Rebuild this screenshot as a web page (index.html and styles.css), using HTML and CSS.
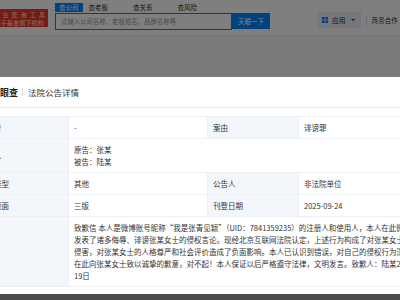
FILE: index.html
```html
<!DOCTYPE html>
<html lang="zh-CN">
<head>
  <meta charset="UTF-8" />
  <meta name="viewport" content="width=device-width, initial-scale=1.0"/>
  <title>法院公告详情</title>
  <link rel="stylesheet" href="styles.css">
</head>
<body>

  <div class="page">
    <header class="topbar">
      <div class="promo">
        <span class="promo-l1">企业查询工具</span>
        <span class="promo-l2">国家母子基金旗下机构</span>
      </div>

      <div class="search">
        <div class="tabs">
          <span class="tab active">查公司</span>
          <span class="tab">查老板</span>
          <span class="tab">查关系</span>
          <span class="tab">查风险</span>
        </div>
        <div class="search-row">
          <div class="search-input">请输入公司名称、老板姓名、品牌名称等</div>
          <button class="search-btn">天眼一下</button>
        </div>
      </div>

      <div class="nav-right">
        <span class="apps">
          <svg width="6" height="6" viewBox="0 0 6 6">
            <rect x="0" y="0" width="2.6" height="2.6" fill="#0084ff"/>
            <rect x="3.4" y="0" width="2.6" height="2.6" fill="#0084ff"/>
            <rect x="0" y="3.4" width="2.6" height="2.6" fill="#0084ff"/>
            <rect x="3.4" y="3.4" width="2.6" height="2.6" fill="#0084ff"/>
          </svg>
          应用
          <span class="caret"></span>
        </span>
        <span class="divider"></span>
        <span class="biz">商务合作</span>
      </div>
    </header>

    <main class="content">
      <p class="tip">本页面展示的法院公告信息来源于公开渠道，请确认，若对该信息有疑问可以联系我们进行反馈处理。</p>
    </main>

    <footer class="footer"></footer>

    <div class="mask"></div>

    <div class="modal">
      <div class="modal-head">
        <span class="brand">天眼查</span>
        <span class="head-sep"></span>
        <span class="modal-title">法院公告详情</span>
      </div>

      <div class="modal-body">
        <table class="detail">
          <colgroup>
            <col class="c-label">
            <col class="c-value">
            <col class="c-label2">
            <col>
          </colgroup>
          <tr>
            <td class="label">公告号</td>
            <td>-</td>
            <td class="label">案由</td>
            <td>诽谤罪</td>
          </tr>
          <tr>
            <td class="label">当事人</td>
            <td colspan="3">原告：张某<br>被告：陆某</td>
          </tr>
          <tr>
            <td class="label">公告类型</td>
            <td>其他</td>
            <td class="label">公告人</td>
            <td>非法院单位</td>
          </tr>
          <tr>
            <td class="label">公告版面</td>
            <td>三版</td>
            <td class="label">刊登日期</td>
            <td>2025-09-24</td>
          </tr>
          <tr>
            <td class="label">内容</td>
            <td colspan="3" class="notice">致歉信 本人是微博账号昵称“我是张青见颖”（UID：7841359235）的注册人和使用人，本人在此微博账号上<br>发表了诸多侮辱、诽谤张某女士的侵权言论。现经北京互联网法院认定，上述行为构成了对张某女士名誉权的<br>侵害，对张某女士的人格尊严和社会评价造成了负面影响。本人已认识到错误，对自己的侵权行为深表歉意，<br>在此向张某女士致以诚挚的歉意，对不起！本人保证以后严格遵守法律，文明发言。致歉人：陆某2025年9月<br>19日</td>
          </tr>
        </table>
      </div>
    </div>
  </div>

</body>
</html>
```

FILE: styles.css
```css
body {
  margin: 0;
  font-family: "Noto Sans CJK SC", "Noto Sans", sans-serif;
  color: #333;
  background: #f5f6f8;
  overflow: hidden;
}
.page {
  position: relative;
  height: 300px;
  overflow: hidden;
  display: flex;
  flex-direction: column;
}
.topbar {
  height: 35px;
  flex-shrink: 0;
  background: #fff;
  border-bottom: 1px solid #e6e6e6;
  display: flex;
  align-items: flex-start;
}
.promo {
  margin: 9px 0 0 -22px;
  width: 70px;
  height: 18px;
  background: #f0362e;
  color: #ffe6c4;
  display: flex;
  flex-direction: column;
  align-items: flex-end;
  justify-content: center;
  line-height: 7px;
}
.promo-l1 {
  font-size: 6px;
  letter-spacing: 3.1px;
}
.promo-l2 {
  font-size: 6.2px;
  padding-right: 4px;
  margin-top: 1px;
  white-space: nowrap;
}
.search {
  margin: 3px 0 0 7px;
}
.tabs {
  display: flex;
  height: 9px;
  font-size: 6.5px;
  line-height: 9px;
  color: #333;
}
.tab {
  margin-right: 25px;
}
.tab.active {
  background: #0084ff;
  color: #fff;
  padding: 0 4px;
  margin-right: 6px;
}
.search-row {
  display: flex;
  margin-top: 1px;
}
.search-input {
  width: 170px;
  height: 15px;
  border: 1px solid #0084ff;
  font-size: 6.4px;
  line-height: 15px;
  color: #999;
  padding-left: 5px;
}
.search-btn {
  width: 38px;
  height: 16px;
  border: none;
  background: #0084ff;
  color: #fff;
  font-family: inherit;
  font-size: 6.5px;
  padding: 0;
}
.nav-right {
  margin: 12px 0 0 48px;
  display: flex;
  align-items: center;
}
.apps {
  height: 16px;
  padding: 0 6px 0 4px;
  background: #e9f0f8;
  display: flex;
  align-items: center;
  gap: 4px;
  font-size: 6.8px;
  color: #333;
}
.caret {
  width: 0;
  height: 0;
  border-left: 2px solid transparent;
  border-right: 2px solid transparent;
  border-top: 2.5px solid #333;
  margin-left: 1px;
}
.divider {
  width: 1px;
  height: 9px;
  background: #ddd;
  margin: 0 5px;
}
.biz {
  font-size: 6.6px;
  color: #333;
  white-space: nowrap;
}
.content {
  flex: 1;
  display: flex;
  align-items: flex-end;
}
.tip {
  margin: 0 0 1px 0;
  font-size: 6px;
  line-height: 8px;
  color: #444;
  white-space: nowrap;
}
.footer {
  height: 6px;
  flex-shrink: 0;
  background: #9a9a9a;
}
.mask {
  position: absolute;
  top: 0;
  left: 0;
  width: 100%;
  height: 100%;
  z-index: 10;
  background: rgba(0, 0, 0, 0.5);
}
.modal {
  position: absolute;
  z-index: 11;
  top: 77px;
  left: -50px;
  width: 520px;
  background: #fff;
  border-radius: 3px;
  padding-bottom: 7px;
}
.modal-head {
  height: 30px;
  border-bottom: 1px solid #eee;
  display: flex;
  align-items: center;
  padding-left: 41px;
}
.brand {
  font-size: 9px;
  font-weight: bold;
  color: #222;
}
.head-sep {
  width: 1px;
  height: 8px;
  background: #ddd;
  margin: 0 5px 0 4px;
}
.modal-title {
  font-size: 8.5px;
  color: #333;
}
.modal-body {
  padding: 8px 23px 0;
}
.detail {
  width: 100%;
  border-collapse: collapse;
  font-size: 7.5px;
  line-height: 12px;
  color: #333;
}
.c-label {
  width: 95px;
}
.c-value {
  width: 139px;
}
.c-label2 {
  width: 91px;
}
.detail td {
  border: 1px solid #edf0f4;
  padding: 4.5px 5px;
  vertical-align: middle;
  white-space: nowrap;
}
.detail .label {
  background: #f3f7fc;
}
.detail .notice {
  white-space: normal;
}
```
